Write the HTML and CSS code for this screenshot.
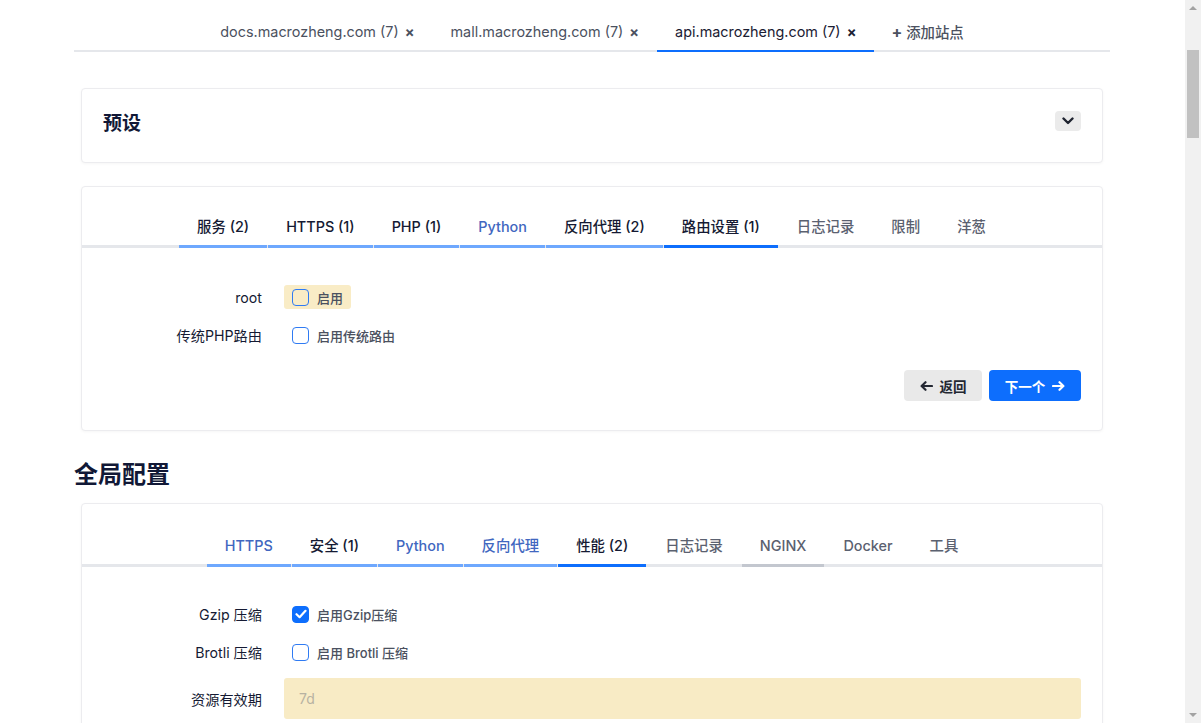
FILE: index.html
```html
<!DOCTYPE html>
<html lang="zh-CN">
<head>
<meta charset="utf-8">
<title>站点配置</title>
<link rel="stylesheet" href="styles.css">
</head>
<body>
<div class="viewport">
<div class="page">
  <nav class="site-tabs">
    <a class="site-tab">docs.macrozheng.com (7) <span class="x">×</span></a>
    <a class="site-tab">mall.macrozheng.com (7) <span class="x">×</span></a>
    <a class="site-tab active">api.macrozheng.com (7) <span class="x">×</span></a>
    <a class="site-tab add"><span class="plus">+</span> 添加站点</a>
  </nav>

  <section class="card preset">
    <h2 class="card-title">预设</h2>
    <button class="chev" aria-label="展开">
      <svg width="12" height="8" viewBox="0 0 12 8"><path d="M1.5 1.5 6 6l4.5-4.5" fill="none" stroke="#1f2430" stroke-width="2.4" stroke-linecap="round" stroke-linejoin="round"/></svg>
    </button>
  </section>

  <section class="card wizard">
    <div class="tabs">
      <a class="tab done dark">服务 (2)</a>
      <a class="tab done dark">HTTPS (1)</a>
      <a class="tab done dark">PHP (1)</a>
      <a class="tab done">Python</a>
      <a class="tab done dark">反向代理 (2)</a>
      <a class="tab current">路由设置 (1)</a>
      <a class="tab">日志记录</a>
      <a class="tab">限制</a>
      <a class="tab">洋葱</a>
    </div>
    <div class="form">
      <div class="row">
        <label class="label">root</label>
        <div class="control"><span class="check-wrap hl"><span class="cb"></span><span class="cb-text">启用</span></span></div>
      </div>
      <div class="row">
        <label class="label">传统PHP路由</label>
        <div class="control"><span class="check-wrap"><span class="cb"></span><span class="cb-text">启用传统路由</span></span></div>
      </div>
      <div class="actions">
        <button class="btn back"><svg class="arr" width="13" height="10" viewBox="0 0 13 10"><path d="M12 5H2M5.5 1.2 1.6 5l3.9 3.8" fill="none" stroke="currentColor" stroke-width="2.2" stroke-linecap="round" stroke-linejoin="round"/></svg> 返回</button>
        <button class="btn next">下一个 <svg class="arr" width="13" height="10" viewBox="0 0 13 10"><path d="M1 5h10M7.5 1.2 11.4 5 7.5 8.8" fill="none" stroke="currentColor" stroke-width="2.2" stroke-linecap="round" stroke-linejoin="round"/></svg></button>
      </div>
    </div>
  </section>

  <h1 class="section-title">全局配置</h1>

  <section class="card global">
    <div class="tabs">
      <a class="tab done">HTTPS</a>
      <a class="tab done dark">安全 (1)</a>
      <a class="tab done">Python</a>
      <a class="tab done">反向代理</a>
      <a class="tab current">性能 (2)</a>
      <a class="tab">日志记录</a>
      <a class="tab mid">NGINX</a>
      <a class="tab">Docker</a>
      <a class="tab">工具</a>
    </div>
    <div class="form">
      <div class="row">
        <label class="label">Gzip 压缩</label>
        <div class="control"><span class="check-wrap"><span class="cb on"><svg width="12" height="10" viewBox="0 0 12 10"><path d="M1.5 5.2 4.6 8.2 10.5 1.8" fill="none" stroke="#fff" stroke-width="2.2" stroke-linecap="round" stroke-linejoin="round"/></svg></span><span class="cb-text">启用Gzip压缩</span></span></div>
      </div>
      <div class="row">
        <label class="label">Brotli 压缩</label>
        <div class="control"><span class="check-wrap"><span class="cb"></span><span class="cb-text">启用 Brotli 压缩</span></span></div>
      </div>
      <div class="row input-row">
        <label class="label">资源有效期</label>
        <div class="control"><input class="text-input" type="text" placeholder="7d"></div>
      </div>
    </div>
  </section>
</div>
</div>
<div class="scrollbar" aria-hidden="true">
  <span class="sb-up"></span>
  <span class="sb-thumb"></span>
  <span class="sb-down"></span>
</div>
</body>
</html>
```

FILE: styles.css
```css
* { box-sizing: border-box; }
html, body { margin: 0; padding: 0; background: #fff; overflow: hidden; }
body {
  font-family: Inter, "Noto Sans CJK SC", "Noto Sans", sans-serif;
  color: #1b2033;
  font-size: 14px;
}
.viewport { width: 1184px; }
.page {
  width: 1036px;
  margin: 0 auto;
}
.site-tabs {
  display: flex;
  justify-content: center;
  border-bottom: 2px solid #e5e7eb;
}
.site-tab {
  padding: 22px 18px 7px;
  line-height: 20px;
  font-size: 14.4px;
  color: #4b5160;
  margin-bottom: -2px;
  border-bottom: 2px solid transparent;
  white-space: nowrap;
}
.site-tab .x { font-weight: 700; margin-left: 2px; color: #4b5160; }
.site-tab.active { color: #1b2033; border-bottom-color: #0d6efd; }
.site-tab.active .x { color: #1b2033; }
.site-tab.add { color: #4b5160; padding-left: 17px; font-weight: 500; }
.site-tab .plus { font-weight: 700; font-size: 16px; }

.card {
  margin: 0 7px;
  background: #fff;
  border: 1px solid #ececef;
  border-radius: 4px;
  box-shadow: 0 1px 3px rgba(0,0,0,0.04);
}
.preset {
  margin-top: 36px;
  height: 75px;
  display: flex;
  align-items: center;
  justify-content: space-between;
  padding: 0 21px;
}
.card-title {
  margin: -3px 0 0;
  font-size: 19px;
  font-weight: 700;
  color: #111836;
  line-height: 26px;
}
.chev {
  width: 26px;
  height: 20px;
  border: none;
  border-radius: 4px;
  background: #ebebeb;
  display: flex;
  align-items: center;
  justify-content: center;
  padding: 0;
  margin-top: -9px;
}
.wizard { margin-top: 23px; }

.tabs {
  display: flex;
  justify-content: center;
  border-bottom: 3px solid #e5e7eb;
  padding-top: 30px;
}
.tab {
  padding: 0 18px 8px;
  line-height: 20px;
  font-size: 14.4px;
  font-weight: 500;
  color: #5b6170;
  margin-bottom: -3px;
  border-bottom: 3px solid #e5e7eb;
  margin-right: 1px;
  white-space: nowrap;
}
.tab.done { color: #4167c0; border-bottom-color: #6ea8fe; }
.tab.done.dark { color: #151a33; }
.tab.current { color: #151a33; border-bottom-color: #0d6efd; }
.tab.mid { border-bottom-color: #c3c7cf; }

.form {
  padding: 37px 21px 29px 0;
}
.row {
  display: flex;
  align-items: center;
  min-height: 24px;
  margin-bottom: 14px;
}
.label {
  width: 180px;
  text-align: right;
  font-size: 14.2px;
  font-weight: 400;
  color: #151a33;
  margin-right: 22px;
  flex: none;
}
.control { flex: 1; display: flex; }
.check-wrap {
  display: inline-flex;
  align-items: center;
  height: 24px;
  padding: 0 8px;
  border-radius: 3px;
}
.check-wrap.hl { background: #f9ecc6; }
.cb {
  width: 17px;
  height: 17px;
  border: 1.5px solid #2f7bf3;
  border-radius: 4px;
  background: #fff;
  display: inline-flex;
  align-items: center;
  justify-content: center;
}
.hl .cb { background: transparent; }
.cb.on { background: #0d6efd; border-color: #0d6efd; }
.cb-text {
  margin-left: 8px;
  font-size: 13px;
  font-weight: 500;
  color: #4b5160;
}
.input-row { margin-top: 11px; margin-bottom: 0; }
.text-input {
  width: 100%;
  height: 41px;
  border: none;
  border-radius: 3px;
  background: #f8ebc5;
  padding: 0 15px;
  font-family: Inter, "Noto Sans CJK SC", sans-serif;
  font-size: 14px;
  color: #1b2033;
  outline: none;
}
.text-input::placeholder { color: #b7b2a2; }

.actions {
  display: flex;
  justify-content: flex-end;
  gap: 7px;
  margin-top: 23px;
}
.btn {
  height: 31px;
  border: none;
  border-radius: 4px;
  font-family: Inter, "Noto Sans CJK SC", sans-serif;
  font-size: 13.5px;
  font-weight: 700;
  padding: 0;
  display: inline-flex;
  align-items: center;
  justify-content: center;
  gap: 7px;
}
.btn.back { background: #e9e9e9; color: #242833; width: 78px; }
.btn.next { background: #0d6efd; color: #fff; width: 92px; }

.section-title {
  margin: 27px 0 11px;
  font-size: 24px;
  font-weight: 700;
  color: #111836;
  line-height: 34px;
}
.global .tabs { padding-top: 32px; }
.global .form { padding-top: 35px; padding-bottom: 40px; }

.scrollbar {
  position: fixed;
  top: 0;
  right: 0;
  width: 16px;
  height: 100%;
  background: #f1f1f1;
}
.sb-up, .sb-down {
  position: absolute;
  left: 4px;
  width: 0;
  height: 0;
  border-left: 4px solid transparent;
  border-right: 4px solid transparent;
}
.sb-up { top: 6px; border-bottom: 4px solid #a3a3a3; }
.sb-down { bottom: 6px; border-top: 4px solid #a3a3a3; }
.sb-thumb {
  position: absolute;
  left: 2px;
  top: 50px;
  width: 12px;
  height: 88px;
  background: #c1c1c1;
}
```
